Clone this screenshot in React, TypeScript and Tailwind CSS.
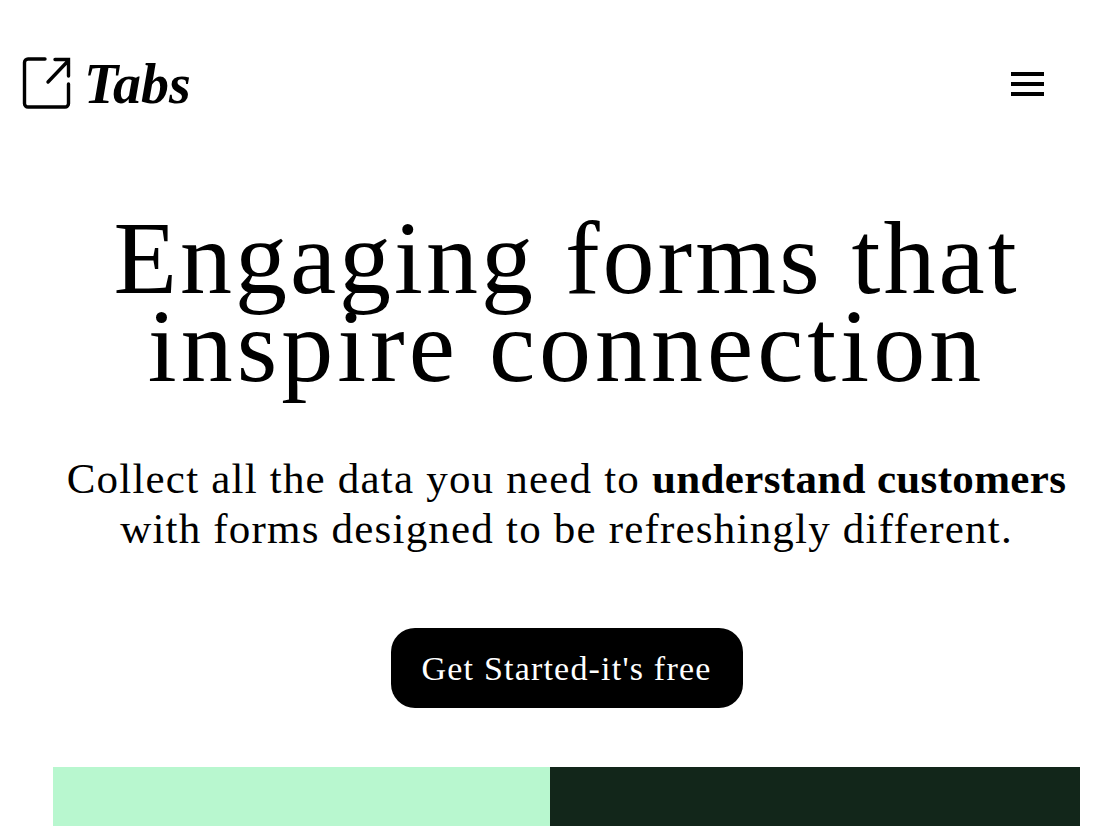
import React from 'react';

export default function App() {
  return (
    <div className="h-[826px] overflow-hidden bg-white text-black font-['Liberation_Serif',serif]">
      <header className="flex items-center justify-between pl-[22px] pr-[56px] pt-[52px]">
        <div className="flex items-center gap-[12px]">
          <svg width="50" height="54" viewBox="0 0 50 54" fill="none" stroke="black" strokeWidth="3.4" strokeLinecap="round">
            <path d="M23 2H6a3.500 3.500 0 0 0-3.500 3.500v41a3.500 3.500 0 0 0 3.500 3.500h37a3.500 3.500 0 0 0 3.500-3.500V27" />
            <path d="M26 25 46 4M33 2.500h13.500V19" />
          </svg>
          <span className="text-[56px] leading-[64px] italic font-bold">Tabs</span>
        </div>
        <div className="flex flex-col gap-[6px]">
          <div className="w-[33px] h-[4px] bg-black" />
          <div className="w-[33px] h-[4px] bg-black" />
          <div className="w-[33px] h-[4px] bg-black" />
        </div>
      </header>
      <main className="ml-[53px] mr-[20px] flex flex-col items-center">
        <h1 className="mt-[98px] text-center text-[104px] leading-[88px] tracking-[3px] whitespace-nowrap">
          Engaging forms that<br />
          <span className="tracking-[4px]">inspire connection</span>
        </h1>
        <p className="mt-[64px] text-center text-[43px] leading-[50px] tracking-[1.2px] whitespace-nowrap">
          Collect all the data you need to <b className="tracking-[0.35px]">understand customers</b><br />
          with forms designed to be refreshingly different.
        </p>
        <button className="mt-[74px] w-[352px] h-[80px] rounded-[24px] bg-black text-white text-[34px] tracking-[1.2px]">
          Get Started-it's free
        </button>
      </main>
      <div className="mt-[59px] ml-[53px] mr-[20px] flex h-[100px]">
        <div className="w-[497px] bg-[#b8f7cf]" />
        <div className="flex-1 bg-[#12261a]" />
      </div>
    </div>
  );
}
